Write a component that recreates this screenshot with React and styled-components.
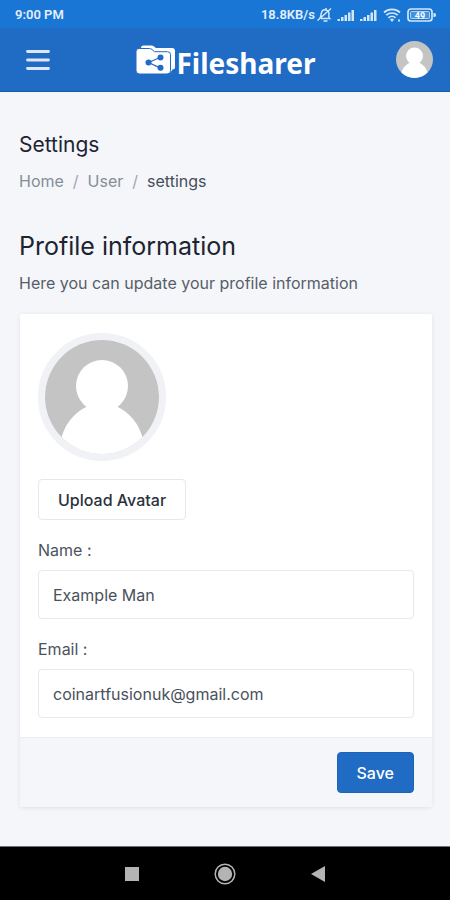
// library, frameworks.
import React, { useState } from "react";
import styled, { createGlobalStyle } from "styled-components";

// global styles
const GlobalStyle = createGlobalStyle`
  * {
    box-sizing: border-box;
  }

  body {
    margin: 0;
    background: #f4f6fa;
    color: #1d2430;
    font-family: Inter, "Liberation Sans", sans-serif;
    font-size: 16px;
    line-height: 24px;
  }

  button, input {
    font: inherit;
    color: inherit;
  }
`;

// styled components
const AppWrap = styled.div`
  display: flex;
  flex-direction: column;
  min-height: 100vh;
`;

const StatusBar = styled.div`
  display: flex;
  align-items: center;
  justify-content: space-between;
  height: 28px;
  padding: 2px 13px 0 15px;
  background: #1976d5;
  color: #e3effb;
  font-family: Roboto, sans-serif;
  font-size: 13px;
  font-weight: 600;
  line-height: 16px;
`;

const StatusIcons = styled.div`
  display: flex;
  align-items: center;
`;

const Header = styled.header`
  display: flex;
  align-items: center;
  justify-content: space-between;
  height: 64px;
  padding: 0 17px 0 19px;
  background: #206bc4;
  border-bottom: 1px solid #1658ab;
`;

const IconButton = styled.button`
  display: flex;
  align-items: center;
  justify-content: center;
  width: 37px;
  height: 37px;
  padding: 0;
  border: 0;
  border-radius: ${(props) => (props.$round ? "50%" : "4px")};
  background: transparent;
  overflow: hidden;
`;

const Brand = styled.a`
  display: flex;
  align-items: flex-start;
  gap: 1px;
  padding-top: 7px;
  color: #fff;
  font-family: "Noto Sans", "Open Sans", sans-serif;
  font-size: 28px;
  font-weight: 700;
  line-height: 36px;
  text-decoration: none;
`;

const Main = styled.main`
  flex: 1;
  padding: 39px 18px 39px 19px;
`;

const PageTitle = styled.h2`
  margin: 0 0 10px;
  font-size: 21px;
  font-weight: 400;
  line-height: 28px;
`;

const Breadcrumb = styled.ol`
  display: flex;
  margin: 0 0 37px;
  padding: 0;
  list-style: none;
  color: #868d97;

  li + li::before {
    content: "/";
    padding: 0 9px;
    color: #a0a6ae;
  }
`;

const Crumb = styled.a`
  color: ${(props) => (props.$current ? "#464e5a" : "#868d97")};
  text-decoration: none;
`;

const SectionTitle = styled.h1`
  margin: 0 0 9px;
  font-size: 25px;
  font-weight: 400;
  line-height: 32px;
`;

const Lead = styled.p`
  margin: 0 0 19px;
  color: #585e68;
`;

const Card = styled.form`
  margin-left: 1px;
  background: #fff;
  border-radius: 2px;
  box-shadow: 0 1px 4px rgba(35, 46, 60, 0.1);
`;

const CardBody = styled.div`
  display: flex;
  flex-direction: column;
  align-items: flex-start;
  gap: 18px;
  padding: 19px 18px;
`;

const AvatarFrame = styled.div`
  width: 128px;
  height: 128px;
  border: 7px solid #f0f2f6;
  border-radius: 50%;
  overflow: hidden;
`;

const Button = styled.button`
  height: 41px;
  padding: 0 19px;
  border: 1px solid ${(props) => (props.$primary ? "#1d63b8" : "#e6e8eb")};
  border-radius: 4px;
  background: ${(props) => (props.$primary ? "#206bc4" : "#fff")};
  color: ${(props) => (props.$primary ? "#fff" : "#2b323d")};
  font-weight: 500;
  line-height: 20px;
`;

const Field = styled.div`
  display: flex;
  flex-direction: column;
  gap: 8px;
  width: 100%;
`;

const Label = styled.label`
  color: #4c535e;
`;

const Input = styled.input`
  width: 100%;
  height: 49px;
  padding: 0 14px;
  border: 1px solid #e6e8eb;
  border-radius: 4px;
  background: #fff;
  color: #4a515c;
  outline: none;
`;

const CardFooter = styled.div`
  display: flex;
  justify-content: flex-end;
  padding: 14px 18px;
  border-top: 1px solid #ebedf0;
  background: #f4f6fa;
`;

const NavBar = styled.nav`
  display: flex;
  align-items: center;
  justify-content: center;
  gap: 56px;
  height: 54px;
  border-top: 1px solid #6d7073;
  background: #000;
`;

// icons
const StatusGlyphs = () => (
  <svg width="122" height="18" viewBox="0 0 122 18" fill="none" stroke="#d3e6fa" strokeWidth="1.500" aria-hidden="true">
    {/* muted bell */}
    <path d="M4.500 12.500c1.800-1.500 1.200-4 2-6C7.200 4.500 9 3.500 11 4c2.200.5 3.200 2.500 2.800 4.500-.3 1.700-.2 2.700.9 4H6M8.500 15h4M11 2v2M2.500 14.500l13.500-12" />
    {/* signal bars, two sims */}
    <g fill="#d3e6fa" stroke="none">
      <path d="M22.500 13h2.500v2h-2.500zM26 11h2.500v4H26zM29.500 9H32v6h-2.500zM33 6.500h2.500V15H33zM36.500 4H39v11h-2.500z" />
      <path d="M45 13h2.500v2H45zM48.500 11H51v4h-2.500zM52 9h2.500v6H52zM55.500 6.500H58V15h-2.500zM59 4h2.500v11H59z" />
      <path d="m77 16-2-2.500a2.800 2.800 0 0 1 4 0zM83 13.500h2v2h-2z" />
    </g>
    {/* wifi */}
    <path strokeWidth="1.700" d="M69 6.500a12 12 0 0 1 16 0M71.300 9.200a8.500 8.500 0 0 1 11.400 0M73.500 11.800a5.200 5.200 0 0 1 7 0" />
    {/* battery */}
    <rect x="93" y="3" width="24" height="12" rx="3" strokeWidth="1.700" />
    <path fill="#d3e6fa" stroke="none" d="M118.500 7h1q1.500 0 1.500 2t-1.500 2h-1z" />
    <rect x="95.500" y="5.500" width="19" height="7" rx="1" fill="#d3e6fa" fillOpacity="0.250" strokeWidth="0.800" />
    <text x="105" y="12.500" textAnchor="middle" fill="#fff" stroke="none" fontSize="9" fontWeight="700">
      49
    </text>
  </svg>
);

const MenuIcon = () => (
  <svg width="24" height="24" viewBox="0 0 24 24" stroke="#dce8f6" strokeWidth="2.800" strokeLinecap="round" aria-hidden="true">
    <path d="M1.500 3.500h21M1.500 12h21M1.500 20.500h21" />
  </svg>
);

const FolderIcon = () => (
  <svg width="39" height="30" viewBox="0 0 39 30" aria-hidden="true">
    <path fill="#fff" d="M5 3q0-2.500 2.500-2.500h8q1.500 0 2.500 1l2 1.500h16q3 0 3 3v16q0 2.500-2.500 2.500L34 28H5z" />
    <path
      fill="#fff"
      stroke="#206bc4"
      strokeWidth="1"
      d="M0 6.500Q0 3.500 3 3.500h10.500q1.500 0 2.500 1l2.500 2.200h13q3 0 3 3v15.800q0 3.500-3.500 3.500H3.500Q0 29 0 25.500z"
    />
    <path stroke="#206bc4" strokeWidth="1.300" d="M12.500 17.500 24 12.500M12.500 17.500 24 22.800" />
    <g fill="#206bc4">
      <circle cx="12.500" cy="17.500" r="3" />
      <circle cx="24.500" cy="12.500" r="3" />
      <circle cx="24.500" cy="22.800" r="3" />
    </g>
  </svg>
);

const Person = () => (
  <svg width="100%" height="100%" viewBox="0 0 114 114" role="img" aria-label="Avatar">
    <rect width="114" height="114" fill="#c4c4c4" />
    <circle cx="57" cy="46" r="26" fill="#fff" />
    <path fill="#fff" d="M43 66 Q57 73 71 66 Q92 76 98 99 L98 114 H16 V99 Q22 76 43 66Z" />
  </svg>
);

// 'App' COMPONENT
const App = () => {
  const [name, setName] = useState("Example Man");
  const [email, setEmail] = useState("coinartfusionuk@gmail.com");

  return (
    <AppWrap>
      <GlobalStyle />

      <StatusBar>
        <span>9:00 PM</span>
        <StatusIcons>
          <span>18.8KB/s</span>
          <StatusGlyphs />
        </StatusIcons>
      </StatusBar>

      <Header>
        <IconButton type="button" aria-label="Menu">
          <MenuIcon />
        </IconButton>
        <Brand href="#">
          <FolderIcon />
          <span>Filesharer</span>
        </Brand>
        <IconButton type="button" $round aria-label="Account">
          <Person />
        </IconButton>
      </Header>

      <Main>
        <PageTitle>Settings</PageTitle>
        <Breadcrumb>
          <li><Crumb href="#">Home</Crumb></li>
          <li><Crumb href="#">User</Crumb></li>
          <li><Crumb href="#" $current aria-current="page">settings</Crumb></li>
        </Breadcrumb>

        <SectionTitle>Profile information</SectionTitle>
        <Lead>Here you can update your profile information</Lead>

        <Card onSubmit={(e) => e.preventDefault()}>
          <CardBody>
            <AvatarFrame>
              <Person />
            </AvatarFrame>
            <Button type="button">Upload Avatar</Button>
            <Field>
              <Label htmlFor="name">Name :</Label>
              <Input id="name" value={name} onChange={(e) => setName(e.target.value)} />
            </Field>
            <Field>
              <Label htmlFor="email">Email :</Label>
              <Input id="email" type="email" value={email} onChange={(e) => setEmail(e.target.value)} />
            </Field>
          </CardBody>
          <CardFooter>
            <Button type="submit" $primary>Save</Button>
          </CardFooter>
        </Card>
      </Main>

      <NavBar>
        <IconButton type="button" aria-label="Recent apps">
          <svg width="14" height="14" aria-hidden="true">
            <rect width="14" height="14" fill="#b4b4b4" />
          </svg>
        </IconButton>
        <IconButton type="button" aria-label="Home">
          <svg width="22" height="22" viewBox="0 0 22 22" aria-hidden="true">
            <circle cx="11" cy="11" r="9.800" fill="none" stroke="#b4b4b4" strokeWidth="1.500" />
            <circle cx="11" cy="11" r="7.200" fill="#b4b4b4" />
          </svg>
        </IconButton>
        <IconButton type="button" aria-label="Back">
          <svg width="14" height="16" viewBox="0 0 14 16" aria-hidden="true">
            <path d="M14 0v16L0 8z" fill="#b4b4b4" />
          </svg>
        </IconButton>
      </NavBar>
    </AppWrap>
  );
};

export default App;
